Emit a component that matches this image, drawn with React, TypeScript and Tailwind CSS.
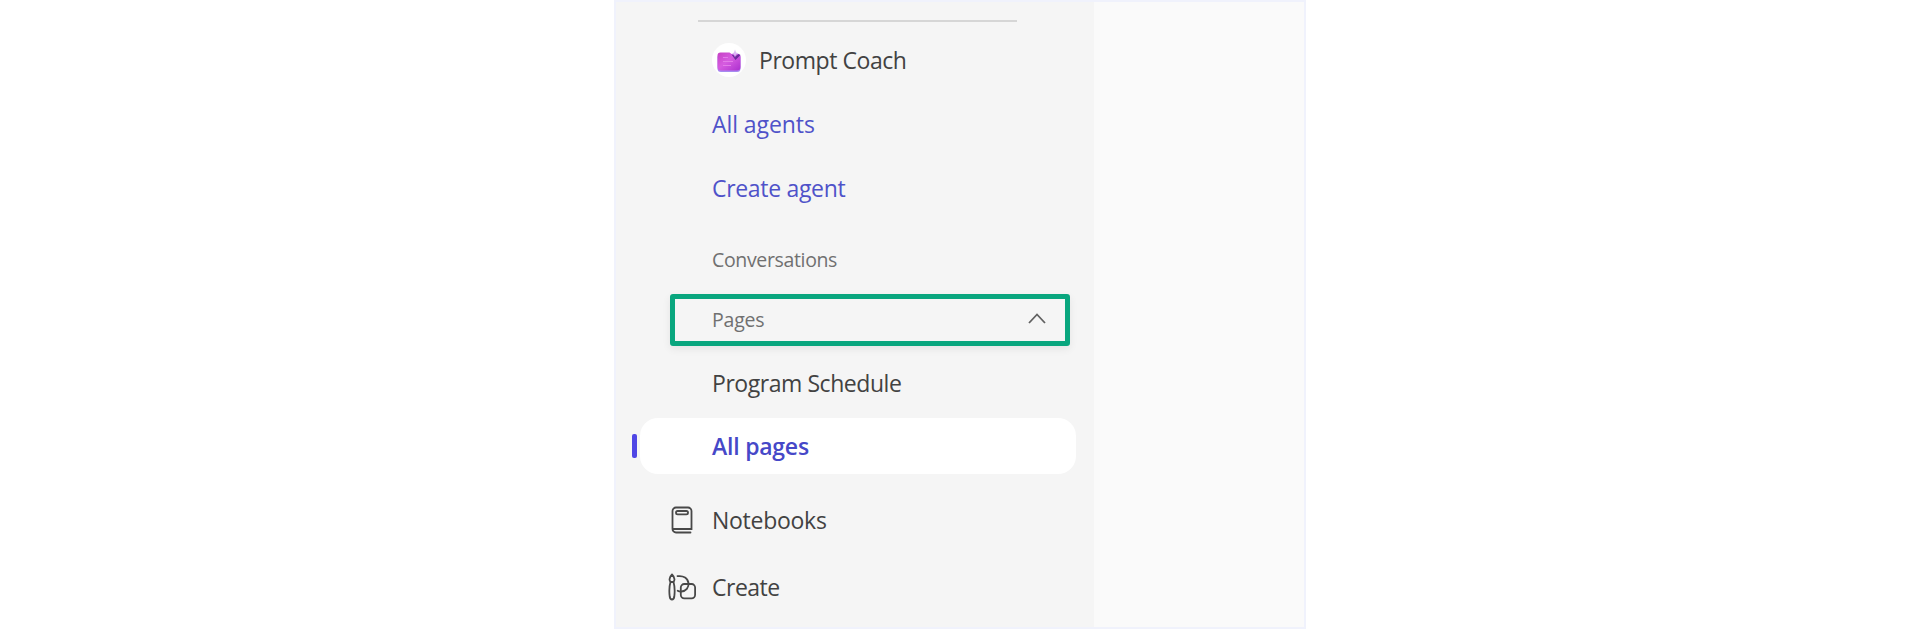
import clsx from "clsx";

const agentLinks = [
  { label: "All agents", tracking: "tracking-[-0.08px]" },
  { label: "Create agent", tracking: "tracking-[-0.32px]" },
];

const PromptCoachIcon = () => (
  <svg width="34" height="34" viewBox="0 0 34 34">
    <defs>
      <linearGradient id="card" x1="0" y1="0" x2="1" y2="1">
        <stop offset="0" stopColor="#c640c4" />
        <stop offset="0.45" stopColor="#d65ce0" />
        <stop offset="1" stopColor="#ac30cf" />
      </linearGradient>
    </defs>
    <circle cx="17" cy="17" r="17" fill="#fff" />
    <rect x="5.5" y="11" width="23" height="18" rx="3.5" fill="#a78bf0" />
    <path
      d="M8.500 9.500h9l2.500 1.700h6a2.500 2.500 0 0 1 2.500 2.500V24a3.500 3.500 0 0 1-3.500 3.500H9A3.500 3.500 0 0 1 5.500 24V12.500a3 3 0 0 1 3-3Z"
      fill="url(#card)"
    />
    <path d="M11 14.500h5M11 18.500h10M11 22.500h8" stroke="#e27ce9" strokeWidth="1.200" />
    <path d="m19.500 11.500 4 5.500 5-5-2-1-2.500 2Z" fill="#6b2a9c" />
    <path d="m23 6.500 1 3 3 1-3 1-1 3-1-3-2-1 2-1Z" fill="#dcb8f5" />
  </svg>
);

const NotebookIcon = () => (
  <svg
    width="22"
    height="28"
    viewBox="0 0 22 28"
    fill="none"
    stroke="#484848"
    strokeWidth="1.8"
    strokeLinecap="round"
  >
    <path d="M19.500 26.500H5A3.500 3.500 0 0 1 1.500 23V5A3.500 3.500 0 0 1 5 1.500h12A3.500 3.500 0 0 1 20.500 5v18H2" />
    <rect x="5" y="5" width="12" height="3.400" rx="1.600" />
  </svg>
);

const CreateIcon = () => (
  <svg
    width="28"
    height="28"
    viewBox="0 0 28 28"
    fill="none"
    stroke="#484848"
    strokeWidth="1.8"
    strokeLinecap="round"
    strokeLinejoin="round"
  >
    <path d="M4 1.500C2.500 3 1.500 4.500 1.500 6.200c0 1.200.5 2.100 1.200 2.800h2.600c.7-.7 1.200-1.600 1.200-2.800C6.500 4.500 5.500 3 4 1.500Z" />
    <path d="M2.500 9C1.300 13 1.200 19.500 1.700 23.500c.3 2 1.100 3 2.300 3s2-1 2.300-3C6.800 19.500 6.700 13 5.500 9" />
    <path d="M9.500 3.200c6-.9 10.500 2 11 7 .5 4.500-2.500 8-7 8.300-1.500.1-2.700-.1-3.800-.8" />
    <rect x="12.800" y="11" width="14.300" height="14.300" rx="3.500" />
  </svg>
);

const NavText = ({
  children,
  className,
}: {
  children: string;
  className?: string;
}) => (
  <span className={clsx("whitespace-nowrap leading-8", className)}>
    {children}
  </span>
);

const Sidebar = () => (
  <nav className="flex w-[478px] flex-col bg-[#f5f5f5] text-[23px] text-[#424242]">
    <div className="ml-[82px] mt-[18px] h-[1.5px] w-[319px] shrink-0 bg-[#d6d6d6]" />

    <div className="mt-[6.5px] flex h-16 shrink-0 items-center gap-[13px] pl-24">
      <PromptCoachIcon />
      <NavText className="tracking-[-0.45px]">Prompt Coach</NavText>
    </div>

    {agentLinks.map((link) => (
      <a
        key={link.label}
        href="#"
        className="flex h-16 shrink-0 items-center pl-24 text-[#4f52c9]"
      >
        <NavText className={link.tracking}>{link.label}</NavText>
      </a>
    ))}

    <div className="mt-5 flex h-10 shrink-0 items-center pl-24 text-[19.5px] text-[#707070]">
      <NavText className="tracking-[-0.35px]">Conversations</NavText>
    </div>

    <button className="ml-[54px] mt-3.5 flex h-[52px] w-[400px] shrink-0 items-center justify-between rounded-[3px] border-[5px] border-[#09a67e] pl-[37px] pr-[19px] text-[19.5px] text-[#707070] shadow-[0_3px_8px_rgba(0,0,0,0.07)]">
      <NavText className="tracking-[-0.2px]">Pages</NavText>
      <svg width="18" height="11" viewBox="0 0 18 11" className="mb-1">
        <path
          d="m1 10 8-8.500 8 8.500"
          fill="none"
          stroke="#616161"
          strokeWidth="1.800"
        />
      </svg>
    </button>

    <div className="mt-[5px] flex h-16 shrink-0 items-center pl-24">
      <NavText className="tracking-[-0.45px]">Program Schedule</NavText>
    </div>

    {/* selected item */}
    <div className="mt-[3px] flex shrink-0 items-center gap-[3px] pl-4">
      <div className="h-6 w-[5px] rounded-[2px] bg-[#4f46e5]" />
      <div className="flex h-14 w-[436px] items-center rounded-[18px] bg-white pl-[72px] font-semibold text-[#4648c8]">
        <NavText className="tracking-[-0.22px]">All pages</NavText>
      </div>
    </div>

    <div className="mt-[18px] flex h-14 shrink-0 items-center pl-[55px]">
      <NotebookIcon />
      <NavText className="ml-[19px] tracking-[-0.27px]">Notebooks</NavText>
    </div>

    <div className="mt-[11px] flex h-14 shrink-0 items-center pl-[52px]">
      <CreateIcon />
      <NavText className="ml-4 tracking-[-0.5px]">Create</NavText>
    </div>
  </nav>
);

const App = () => {
  return (
    <main className="flex h-[629px] justify-center overflow-hidden bg-white font-['Open_Sans','Noto_Sans',sans-serif]">
      <div className="flex w-[692px] border-2 border-[#f0f2fc]">
        <Sidebar />
        <div className="flex-1 bg-[#fafafa]" />
      </div>
    </main>
  );
};

export default App;
